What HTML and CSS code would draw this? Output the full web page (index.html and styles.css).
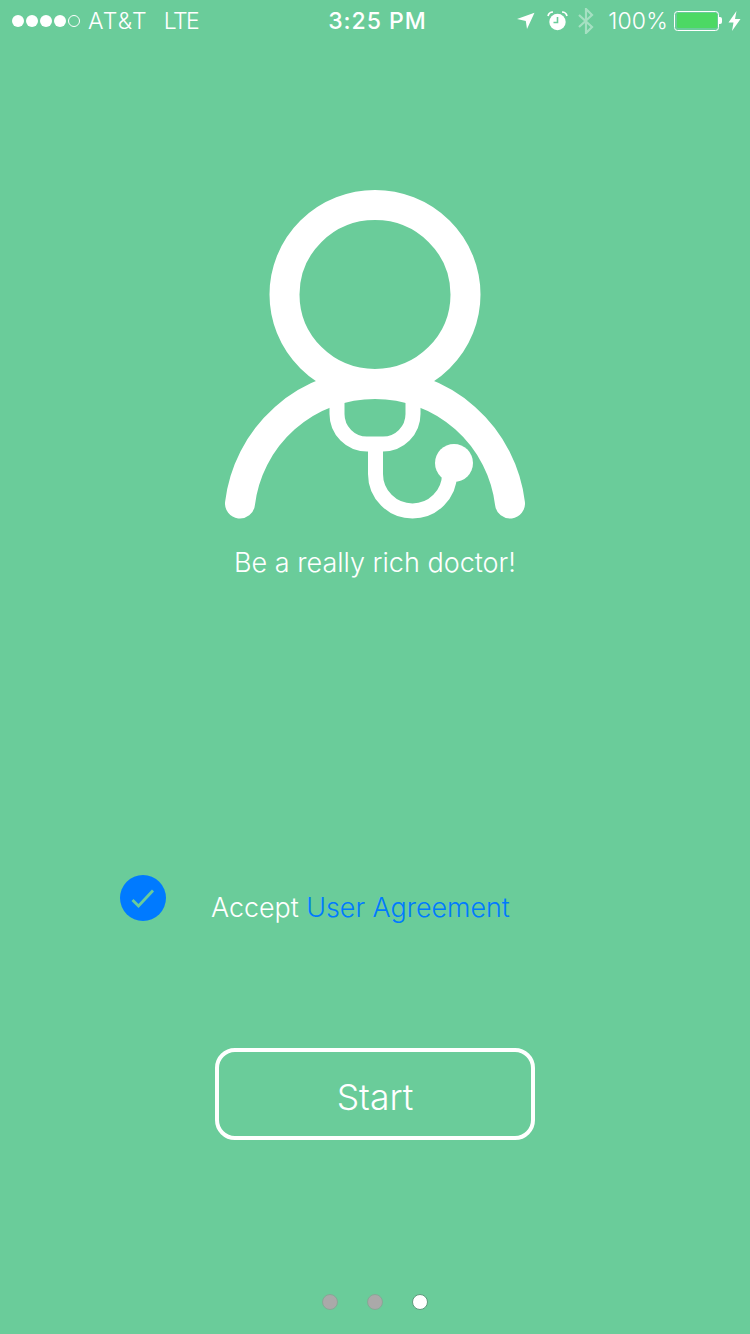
FILE: index.html
```html
<!DOCTYPE html>
<html lang="en">
<head>
<meta charset="utf-8">
<title>Start</title>
<link rel="stylesheet" href="styles.css">
</head>
<body>
<div class="screen">
  <header class="status">
    <div class="status-left">
      <span class="signal"><i></i><i></i><i></i><i></i><i class="off"></i></span>
      <span class="carrier">AT&amp;T</span>
      <span class="net">LTE</span>
    </div>
    <div class="time">3:25 PM</div>
    <div class="status-right">
      <svg class="ic-loc" width="18" height="18" viewBox="0 0 18 18"><path d="M17.5 .8 L0 7 L8.8 9 L10 17 Z" fill="#fff"/></svg>
      <svg class="ic-alarm" width="21" height="20" viewBox="0 0 21 20"><circle cx="10.5" cy="11" r="8.2" fill="#fff"/><path d="M10.5 6 V11.5 H6.5" fill="none" stroke="#6acc9a" stroke-width="1.6"/><path d="M1 5 Q2 1 6 1 M20 5 Q19 1 15 1" fill="none" stroke="#fff" stroke-width="1.7"/></svg>
      <svg class="ic-bt" width="16" height="26" viewBox="0 0 16 26"><path d="M1 7 L14 19 L8 25 V1 L14 7 L1 19" fill="none" stroke="#fff" stroke-opacity=".4" stroke-width="2.2"/></svg>
      <span class="pct">100%</span>
      <span class="battery"><span class="battery-fill"></span></span>
      <span class="nub"></span>
      <svg class="ic-bolt" width="13" height="20" viewBox="0 0 13 20"><path d="M8.5 0 L0.5 11.5 H5.5 L4 20 L12.5 8 H7 Z" fill="#fff"/></svg>
    </div>
  </header>

  <main class="content">
    <svg class="doctor" width="300" height="330" viewBox="225 189 300 330">
      <g fill="none" stroke="#fff" stroke-linecap="round">
        <path d="M240 503.5 A136 136 0 0 1 510 503.5" stroke-width="30"/>
        <path d="M337 395 V414 A30 30 0 0 0 367 444 H383 A30 30 0 0 0 413 414 V395" stroke-width="15"/>
        <path d="M375.5 444 V474 A37 37 0 0 0 449.5 474" stroke-width="15" stroke-linecap="butt"/>
        <ellipse class="head" cx="375" cy="294.5" rx="90.5" ry="89.5" stroke-width="30"/>
      </g>
      <circle cx="454" cy="463" r="19" fill="#fff"/>
    </svg>
    <p class="slogan">Be a really rich doctor!</p>

    <div class="accept">
      <span class="check">
        <svg width="46" height="46" viewBox="0 0 46 46"><path d="M12.5 25 L18.5 31 L33 15.5" fill="none" stroke="#6acc9a" stroke-width="2.8"/></svg>
      </span>
      <span class="accept-text">Accept <a class="link">User Agreement</a></span>
    </div>

    <button class="start">Start</button>

    <div class="dots"><i></i><i></i><i class="on"></i></div>
  </main>
</div>
</body>
</html>
```

FILE: styles.css
```css
* { box-sizing: border-box; }
html, body { margin: 0; padding: 0; }
body { background: #6acc9a; }
.screen {
  width: 750px;
  height: 1334px;
  background: #6acc9a;
  color: #fff;
  font-family: Inter, "Liberation Sans", Arial, sans-serif;
  font-weight: 300;
  display: flex;
  flex-direction: column;
  overflow: hidden;
}
.status {
  height: 40px;
  display: grid;
  grid-template-columns: 1fr auto 1fr;
  align-items: center;
  font-size: 23px;
  padding: 1px 9px 0 12px;
}
.status-left { display: flex; align-items: center; }
.signal { display: flex; gap: 2px; margin-right: 8px; }
.signal i { width: 12px; height: 12px; border-radius: 50%; background: #fff; display: block; }
.signal i.off { background: none; border: 1.2px solid #fff; }
.carrier { letter-spacing: 1.2px; }
.net { margin-left: 16px; letter-spacing: -1.6px; }
.time { font-weight: 500; font-size: 23px; letter-spacing: 1px; padding-left: 2px; }
.status-right { display: flex; align-items: center; justify-content: flex-end; }
.ic-loc { margin: 1px 12px 0 0; }
.ic-alarm { margin-right: 10px; }
.ic-bt { margin-right: 14px; }
.pct { margin-right: 6px; letter-spacing: .2px; }
.battery { width: 45px; height: 20px; border: 1.2px solid #fff; border-radius: 3.5px; padding: 1.5px; display: block; }
.battery-fill { display: block; height: 100%; background: #4cd964; border-radius: 1.5px; }
.nub { width: 3px; height: 7px; background: #fff; border-radius: 0 2px 2px 0; margin-right: 6px; }
.ic-bolt { display: block; }

.content { flex: 1; display: flex; flex-direction: column; align-items: center; }
.doctor { display: block; margin-top: 149px; }
.head { fill: #6acc9a; }
.slogan { margin: 26px 0 0; font-size: 27px; line-height: 36px; }
.accept {
  align-self: flex-start;
  display: flex;
  align-items: flex-start;
  margin: 294px 0 0 120px;
}
.check { width: 46px; height: 46px; border-radius: 50%; background: #007aff; display: block; }
.check svg { display: block; }
.accept-text { margin: 14px 0 0 45px; font-size: 26.85px; line-height: 36px; }
.link { color: #007aff; }
.start {
  width: 320px;
  height: 92px;
  margin-top: 123px;
  padding: 7px 0 0;
  background: none;
  border: 4px solid #fff;
  border-radius: 20px;
  color: #fff;
  font-family: inherit;
  font-weight: 300;
  font-size: 35.5px;
}
.dots { display: flex; gap: 29px; margin-top: 154px; }
.dots i { width: 16px; height: 16px; border-radius: 50%; background: #aaa9a9; border: 1.5px solid #86a896; display: block; }
.dots i.on { background: #fff; border-color: #5e9a7c; }
```
